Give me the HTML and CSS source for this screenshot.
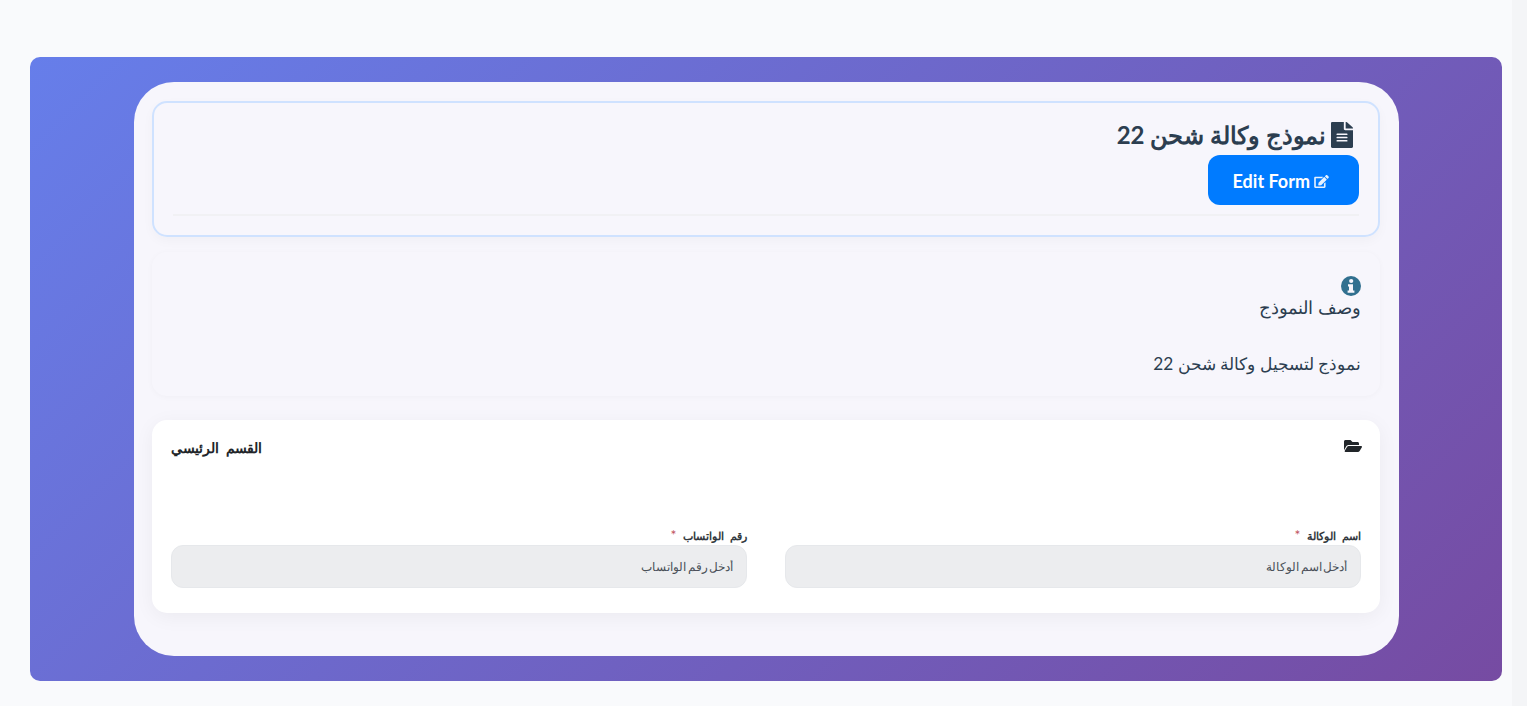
FILE: index.html
```html
<!DOCTYPE html>
<html lang="ar" dir="rtl">
<head>
    <meta charset="UTF-8">
    <meta name="viewport" content="width=device-width, initial-scale=1.0">
    <title>نموذج وكالة شحن 22</title>
    <link rel="stylesheet" href="styles.css">
</head>
<body>
    <div class="page">
        <div class="gradient-box">
            <div class="form-card">
                <div class="form-header">
                    <h1 class="form-title">
                        <svg class="title-icon" viewBox="0 0 384 512" preserveAspectRatio="none"><path fill="currentColor" d="M224 136V0H24C10.700 0 0 10.700 0 24v464c0 13.300 10.700 24 24 24h336c13.300 0 24-10.700 24-24V160H248c-13.200 0-24-10.800-24-24zm64 236c0 6.600-5.400 12-12 12H108c-6.600 0-12-5.400-12-12v-8c0-6.600 5.400-12 12-12h168c6.600 0 12 5.400 12 12v8zm0-64c0 6.600-5.400 12-12 12H108c-6.600 0-12-5.400-12-12v-8c0-6.600 5.400-12 12-12h168c6.600 0 12 5.400 12 12v8zm0-72v8c0 6.600-5.400 12-12 12H108c-6.600 0-12-5.400-12-12v-8c0-6.600 5.400-12 12-12h168c6.600 0 12 5.400 12 12zm96-114.100v6.100H256V0h6.100c6.400 0 12.500 2.500 17 7l97.900 98c4.500 4.500 7 10.600 7 16.900z"/></svg>
                        <span>نموذج وكالة شحن 22</span>
                    </h1>
                    <a class="edit-btn" href="#">
                        <svg class="edit-icon" viewBox="0 0 576 512"><path fill="currentColor" d="M402.600 83.200l90.200 90.200c3.800 3.800 3.800 10 0 13.800L274.400 405.600l-92.800 10.300c-12.400 1.400-22.900-9.100-21.500-21.500l10.300-92.800L388.800 83.200c3.800-3.800 10-3.800 13.800 0zm162-22.900l-48.800-48.800c-15.200-15.200-39.900-15.200-55.200 0l-35.400 35.400c-3.800 3.800-3.800 10 0 13.800l90.200 90.200c3.800 3.800 10 3.800 13.800 0l35.400-35.400c15.200-15.300 15.200-40 0-55.200zM384 346.200V448H64V128h229.800c3.200 0 6.200-1.300 8.500-3.500l40-40c7.600-7.600 2.200-20.500-8.500-20.500H48C21.500 64 0 85.500 0 112v352c0 26.500 21.500 48 48 48h352c26.500 0 48-21.500 48-48V306.200c0-10.700-12.900-16-20.500-8.500l-40 40c-2.200 2.300-3.500 5.300-3.500 8.500z"/></svg>
                        <span dir="ltr">Edit Form</span>
                    </a>
                    <div class="header-line"></div>
                </div>

                <div class="description">
                    <svg class="info-icon" viewBox="0 0 20 20">
                        <circle cx="10" cy="10" r="10" fill="currentColor"/>
                        <circle cx="10.200" cy="5" r="2.100" fill="#f7f6fc"/>
                        <path fill="#f7f6fc" d="M7 8.200h5v6.300h1.400v2.300H6.600v-2.300H8v-4H7z"/>
                    </svg>
                    <div class="desc-title">وصف النموذج</div>
                    <p class="desc-text">نموذج لتسجيل وكالة شحن 22</p>
                </div>

                <div class="section">
                    <div class="section-head">
                        <svg class="folder-icon" viewBox="0 0 576 512"><path fill="currentColor" d="M572.700 292.100L500.300 416.200A63.900 63.900 0 0 1 445 448H45c-18.500 0-30.100-20.100-20.700-36.100l72.400-124.200A64 64 0 0 1 152 256h400c18.500 0 30.100 20.100 20.700 36.100zM152 224h328v-48c0-26.500-21.500-48-48-48H272l-64-64H48C21.500 64 0 85.500 0 112v278l69.100-118.400C86.200 242.300 118 224 152 224z"/></svg>
                        <span class="section-title">القسم الرئيسي</span>
                    </div>
                    <div class="fields">
                        <div class="field">
                            <label class="field-label">اسم الوكالة <span class="req">*</span></label>
                            <input class="field-input" type="text" placeholder="أدخل اسم الوكالة">
                        </div>
                        <div class="field">
                            <label class="field-label">رقم الواتساب <span class="req">*</span></label>
                            <input class="field-input" type="text" placeholder="أدخل رقم الواتساب">
                        </div>
                    </div>
                </div>
            </div>
        </div>
    </div>
</body>
</html>
```

FILE: styles.css
```css
* {
    box-sizing: border-box;
}
html, body {
    height: 100%;
    margin: 0;
}
body {
    background: linear-gradient(to left, #f4f5f7 15px, #f9fafc 15px);
    font-family: Lato, sans-serif;
    color: #2c3e50;
    overflow: hidden;
}
.page {
    padding: 57px 25px 25px 30px;
}
.gradient-box {
    height: 624px;
    border-radius: 10px;
    background: linear-gradient(135deg, #667eea 0%, #764ba2 100%);
    padding: 25px 103px 25px 104px;
}
.form-card {
    height: 574px;
    border-radius: 40px;
    background: #f7f6fc;
    padding: 19px 19px 0 18px;
}
.form-header {
    height: 136px;
    border: 2px solid #cfe2ff;
    border-radius: 15px;
    padding: 17px 19px 0;
    box-shadow: 0 4px 12px rgba(0, 0, 0, 0.03);
}
.form-title {
    display: flex;
    align-items: flex-start;
    gap: 5px;
    margin: 0;
    height: 35px;
    font-size: 24px;
    line-height: 30px;
    font-weight: 700;
    color: #2c3e50;
}
.title-icon {
    width: 22px;
    height: 26px;
    margin: 2px 6px 0 0;
    flex-shrink: 0;
}
.edit-btn {
    display: inline-flex;
    align-items: center;
    gap: 4px;
    width: 151px;
    height: 50px;
    padding: 2px 30px 0 0;
    border-radius: 12px;
    background: #007bff;
    color: #fff;
    font-size: 18px;
    font-weight: 700;
    text-decoration: none;
}
.edit-icon {
    width: 15px;
    height: 13px;
    opacity: 0.9;
}
.header-line {
    height: 2px;
    margin-top: 9px;
    background: #f1f1f4;
}
.description {
    height: 144px;
    margin-top: 15px;
    padding: 24px 19px 0;
    border-radius: 15px;
    box-shadow: 0 1px 6px rgba(0, 0, 0, 0.03);
}
.info-icon {
    display: block;
    width: 20px;
    height: 20px;
    color: #31708f;
}
.desc-title {
    font-size: 18px;
    line-height: 23px;
    color: #2c3e50;
}
.desc-text {
    margin: 33px 0 0;
    font-size: 17.3px;
    line-height: 24px;
    color: #2c3e50;
}
.section {
    height: 193px;
    margin-top: 24px;
    padding: 17px 19px 0;
    border-radius: 15px;
    background: #fff;
    box-shadow: 0 4px 20px rgba(0, 0, 0, 0.05);
}
.section-head {
    display: flex;
    justify-content: space-between;
    align-items: center;
    height: 20px;
    color: #212529;
}
.folder-icon {
    width: 18px;
    height: 16px;
    margin: 0 -1px 2px 0;
}
.section-title {
    font-size: 14.4px;
    font-weight: 700;
    word-spacing: 4px;
}
.fields {
    display: grid;
    grid-template-columns: 576px 576px;
    gap: 38px;
    margin-top: 70px;
}
.field-label {
    display: block;
    height: 18px;
    font-size: 11.4px;
    font-weight: 700;
    line-height: 16px;
    word-spacing: 3px;
    color: #343a40;
}
.req {
    margin-right: 1px;
    font-size: 14px;
    font-weight: 400;
    color: #c0525c;
}
.field-input {
    display: block;
    width: 100%;
    height: 43px;
    padding: 0 13px;
    border: 1px solid #e6e8eb;
    border-radius: 12px;
    background: #ecedef;
    font-family: inherit;
    font-size: 11.5px;
    word-spacing: -1.5px;
    outline: none;
}
.field-input::placeholder {
    color: #495057;
    opacity: 1;
}
```
